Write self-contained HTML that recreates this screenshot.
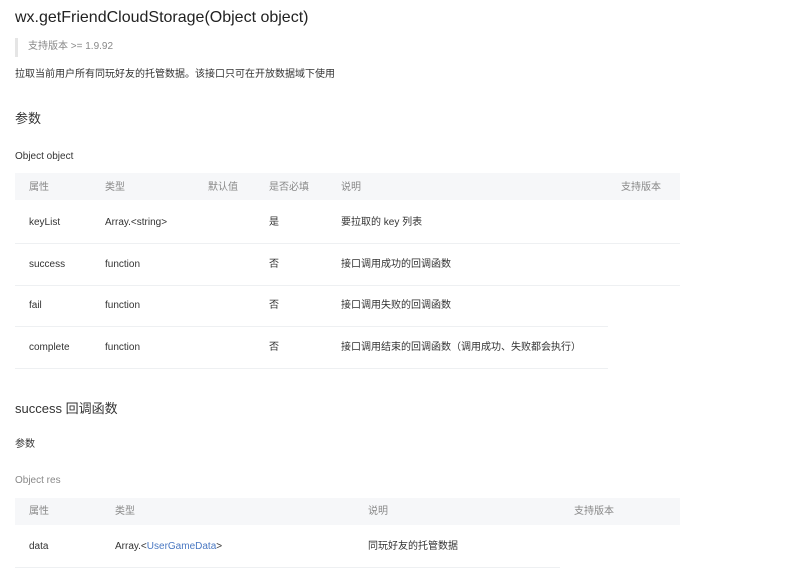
<!DOCTYPE html>
<html><head><meta charset="utf-8"><style>
body{margin:0;width:800px;height:582px;background:#fff;overflow:hidden;font-family:"Liberation Sans","Noto Sans CJK SC",sans-serif;color:#333;position:relative}
.a{position:absolute;white-space:nowrap;line-height:1}
.s{font-size:10px}
.g{color:#888}
.hd{position:absolute;left:15px;width:665px;background:#f6f7f9}
.ln{position:absolute;left:15px;height:1px;background:#eef0f2}
</style></head><body>
<div class="a" style="left:15px;top:10px;font-size:16px;color:#222">wx.getFriendCloudStorage(Object object)</div>
<div style="position:absolute;left:15px;top:38px;width:3px;height:19px;background:#e5e5e5"></div>
<div class="a s g" style="left:28px;top:42px">支持版本 &gt;= 1.9.92</div>
<div class="a s" style="left:15px;top:70px">拉取当前用户所有同玩好友的托管数据。该接口只可在开放数据域下使用</div>
<div class="a" style="left:15px;top:112px;font-size:13px">参数</div>
<div class="a s" style="left:15px;top:152px">Object object</div>
<div class="hd" style="top:173px;height:27px"></div>
<div class="a s g" style="left:29px;top:183px">属性</div>
<div class="a s g" style="left:105px;top:183px">类型</div>
<div class="a s g" style="left:208px;top:183px">默认值</div>
<div class="a s g" style="left:269px;top:183px">是否必填</div>
<div class="a s g" style="left:341px;top:183px">说明</div>
<div class="a s g" style="left:621px;top:183px">支持版本</div>

<div class="a s" style="left:29px;top:218px">keyList</div><div class="a s" style="left:105px;top:218px">Array.&lt;string&gt;</div><div class="a s" style="left:269px;top:218px">是</div><div class="a s" style="left:341px;top:218px">要拉取的 key 列表</div>
<div class="ln" style="top:243px;width:665px"></div>
<div class="a s" style="left:29px;top:260px">success</div><div class="a s" style="left:105px;top:260px">function</div><div class="a s" style="left:269px;top:260px">否</div><div class="a s" style="left:341px;top:260px">接口调用成功的回调函数</div>
<div class="ln" style="top:285px;width:665px"></div>
<div class="a s" style="left:29px;top:301px">fail</div><div class="a s" style="left:105px;top:301px">function</div><div class="a s" style="left:269px;top:301px">否</div><div class="a s" style="left:341px;top:301px">接口调用失败的回调函数</div>
<div class="ln" style="top:326px;width:593px"></div>
<div class="a s" style="left:29px;top:343px">complete</div><div class="a s" style="left:105px;top:343px">function</div><div class="a s" style="left:269px;top:343px">否</div><div class="a s" style="left:341px;top:343px">接口调用结束的回调函数（调用成功、失败都会执行）</div>
<div class="ln" style="top:368px;width:593px"></div>

<div class="a" style="left:15px;top:402px;font-size:13px">success 回调函数</div>
<div class="a s" style="left:15px;top:440px">参数</div>
<div class="a s g" style="left:15px;top:476px">Object res</div>
<div class="hd" style="top:498px;height:27px"></div>
<div class="a s g" style="left:29px;top:507px">属性</div>
<div class="a s g" style="left:115px;top:507px">类型</div>
<div class="a s g" style="left:368px;top:507px">说明</div>
<div class="a s g" style="left:574px;top:507px">支持版本</div>
<div class="a s" style="left:29px;top:542px">data</div>
<div class="a s" style="left:115px;top:542px">Array.&lt;<span style="color:#4a78c2">UserGameData</span>&gt;</div>
<div class="a s" style="left:368px;top:542px">同玩好友的托管数据</div>
<div class="ln" style="top:567px;width:545px"></div>
</body></html>
